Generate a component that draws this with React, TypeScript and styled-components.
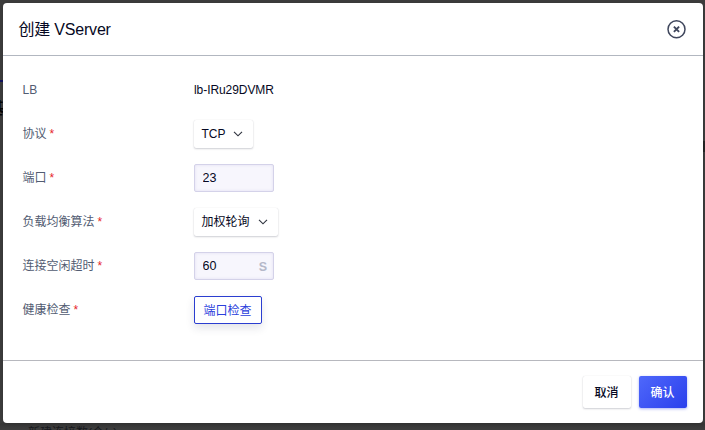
import React from "react";
import styled, { createGlobalStyle } from "styled-components";

const Global = createGlobalStyle`
  * { box-sizing: border-box; }
  html, body { margin: 0; height: 100%; overflow: hidden; }
  body {
    background: #3c3c3c;
    font-family: "Liberation Sans", "Noto Sans CJK SC", sans-serif;
    font-size: 12px;
    color: #060823;
  }
`;

const Page = styled.div`
  position: relative;
  width: 705px;
  height: 430px;
  padding: 3px 2px 7px 3px;
  overflow: hidden;
  background: linear-gradient(#3c3c3c 422px, #363636 424px, #3e3e3e 430px);
`;

const Behind = styled.span<{ $x: number; $y: number; $size: number; $bold?: boolean }>`
  position: absolute;
  left: ${(p) => p.$x}px;
  top: ${(p) => p.$y}px;
  font-size: ${(p) => p.$size}px;
  line-height: 1;
  font-weight: ${(p) => (p.$bold ? 700 : 400)};
  color: ${(p) => (p.$bold ? "#050505" : "#17181c")};
  white-space: nowrap;
`;

const BehindMark = styled.i<{ $x: number; $y: number; $w: number; $h: number; $color: string }>`
  position: absolute;
  left: ${(p) => p.$x}px;
  top: ${(p) => p.$y}px;
  width: ${(p) => p.$w}px;
  height: ${(p) => p.$h}px;
  background: ${(p) => p.$color};
`;

const Dialog = styled.section`
  position: relative;
  display: flex;
  flex-direction: column;
  width: 700px;
  height: 420px;
  background: #fff;
  border-radius: 4px;
  box-shadow: 0 1px 3px rgba(0, 0, 0, 0.15);
`;

const Header = styled.header`
  display: flex;
  align-items: center;
  justify-content: space-between;
  height: 53px;
  padding: 0 17px 0 15.5px;
  border-bottom: 1px solid #b2b7c0;
`;

const Title = styled.h1`
  margin: 0;
  padding-top: 2px;
  font-size: 16px;
  font-weight: 400;
  letter-spacing: -0.2px;
  line-height: 24px;
`;

const Close = styled.button`
  display: flex;
  padding: 0;
  border: 0;
  background: none;
  color: #3f465c;
  cursor: pointer;
`;

const Body = styled.div`
  display: flex;
  flex-direction: column;
  flex: 1;
  gap: 16px;
  padding: 20px 20px 0 19.5px;
`;

const Row = styled.div`
  display: grid;
  grid-template-columns: 171.5px 1fr;
  align-items: center;
  height: 28px;
`;

const Label = styled.label`
  color: #525c72;
  line-height: 20px;
`;

const RequiredLabel = styled(Label)`
  padding-top: 1px;
  line-height: 21px;
`;

const Value = styled.span`
  letter-spacing: -0.07px;
`;

const Star = styled.span`
  margin-left: 3px;
  color: #e6252b;
`;

const Select = styled.button<{ $width: number }>`
  display: flex;
  align-items: center;
  justify-content: space-between;
  width: ${(p) => p.$width}px;
  height: 28px;
  padding: 0 10px 1px 7.5px;
  border: 0;
  border-radius: 2px;
  background: #fff;
  box-shadow: 0 1px 2px rgba(20, 24, 50, 0.2), 0 0 1px rgba(20, 24, 50, 0.14);
  font: inherit;
  line-height: 16px;
  color: inherit;
`;

const Field = styled.div`
  display: flex;
  align-items: center;
  width: 80px;
  height: 28px;
  padding: 0 6px 0 7.5px;
  border: 1px solid #d4d2e9;
  border-radius: 2px;
  background: #f7f6fd;
  box-shadow: inset 0 0 3px rgba(90, 80, 170, 0.14);
`;

const Input = styled.input`
  flex: 1;
  min-width: 0;
  padding: 0;
  border: 0;
  outline: 0;
  background: none;
  font: inherit;
  font-size: 12.5px;
  color: inherit;
`;

const Unit = styled.span`
  padding-top: 1px;
  font-size: 12.5px;
  font-weight: 700;
  color: #b5b8c9;
`;

const Choice = styled.button`
  width: 68px;
  height: 28px;
  padding: 0 1px 2px 0;
  border: 1px solid #2b3ed0;
  border-radius: 2px;
  background: #fff;
  box-shadow: 0 4px 8px rgba(40, 48, 80, 0.13);
  font: inherit;
  color: #2b40dc;
`;

const Footer = styled.footer`
  display: flex;
  justify-content: flex-end;
  gap: 8px;
  height: 63px;
  padding: 15px 16px;
  border-top: 1px solid #b7b8be;
`;

const Button = styled.button<{ $primary?: boolean }>`
  width: 48px;
  height: 32px;
  padding: 0 1px 2px 0;
  border: 0;
  border-radius: 2px;
  background: ${(p) => (p.$primary ? "linear-gradient(135deg, #4f68fb, #2a3fec)" : "#fff")};
  box-shadow: ${(p) =>
    p.$primary
      ? "0 1px 3px rgba(40, 60, 230, 0.4)"
      : "0 1px 2px rgba(20, 24, 50, 0.2), 0 0 1px rgba(20, 24, 50, 0.14)"};
  font: inherit;
  font-weight: 500;
  color: ${(p) => (p.$primary ? "#fff" : "inherit")};
`;

const Chevron = () => (
  <svg width="10" height="6" viewBox="0 0 10 6" fill="none" stroke="#30343f" strokeWidth="1.15">
    <path d="M1 .8l4 4 4-4" />
  </svg>
);

const Required = ({ children }: { children: React.ReactNode }) => (
  <RequiredLabel>
    {children}
    <Star>*</Star>
  </RequiredLabel>
);

export default function App() {
  return (
    <>
      <Global />
      <Page>
        <BehindMark $x={0} $y={80} $w={3} $h={2} $color="#11125c" />
        <Behind $x={-12} $y={101} $size={16} $bold>基</Behind>
        <BehindMark $x={703} $y={141} $w={2} $h={11} $color="#242424" />
        <Behind $x={28} $y={427} $size={12}>新建连接数(个/s)</Behind>
        <Dialog>
          <Header>
            <Title>创建 VServer</Title>
            <Close aria-label="close">
              <svg width="19" height="19" viewBox="0 0 19 19" fill="none" stroke="currentColor">
                <circle cx="9.5" cy="9.3" r="8.5" strokeWidth="1.5" />
                <path d="M6.9 6.7l5.2 5.2M12.1 6.7l-5.2 5.2" strokeWidth="1.9" />
              </svg>
            </Close>
          </Header>
          <Body>
            <Row>
              <Label>LB</Label>
              <Value>lb-IRu29DVMR</Value>
            </Row>
            <Row>
              <Required>协议</Required>
              <Select $width={59}>TCP<Chevron /></Select>
            </Row>
            <Row>
              <Required>端口</Required>
              <Field><Input defaultValue="23" /></Field>
            </Row>
            <Row>
              <Required>负载均衡算法</Required>
              <Select $width={84}>加权轮询<Chevron /></Select>
            </Row>
            <Row>
              <Required>连接空闲超时</Required>
              <Field><Input defaultValue="60" /><Unit>S</Unit></Field>
            </Row>
            <Row>
              <Required>健康检查</Required>
              <Choice>端口检查</Choice>
            </Row>
          </Body>
          <Footer>
            <Button>取消</Button>
            <Button $primary>确认</Button>
          </Footer>
        </Dialog>
      </Page>
    </>
  );
}
